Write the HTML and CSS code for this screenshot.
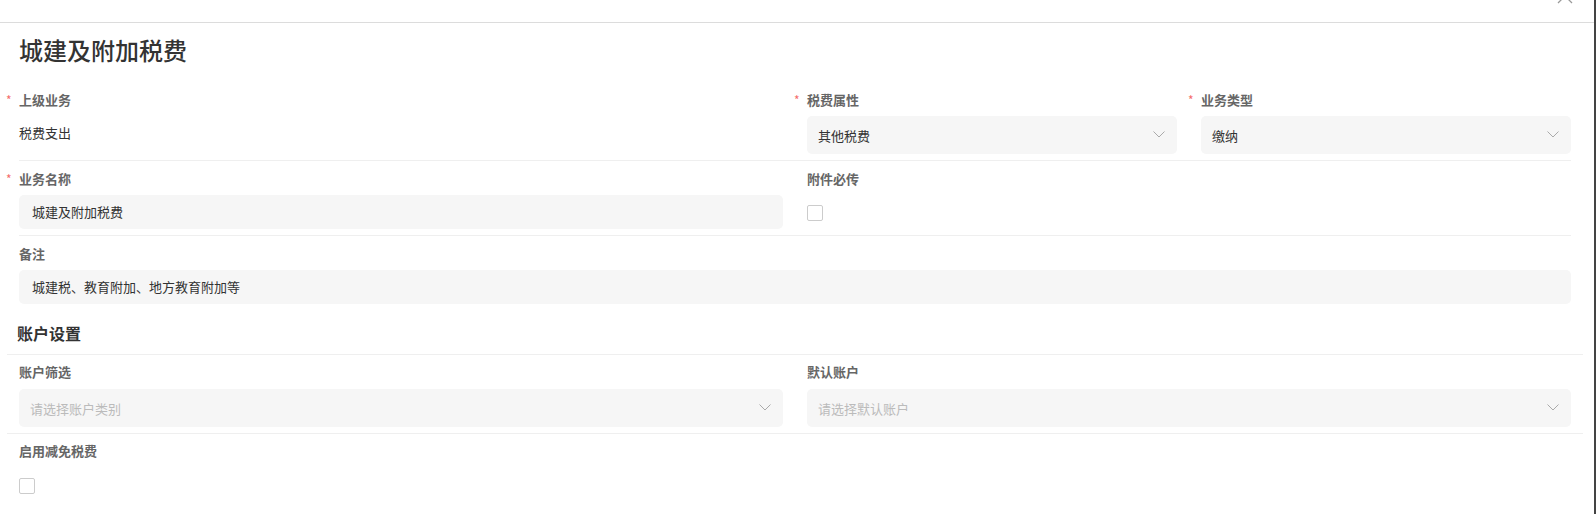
FILE: index.html
```html
<!DOCTYPE html>
<html lang="zh-CN">
<head>
    <meta charset="UTF-8">
    <meta name="viewport" content="width=device-width, initial-scale=1.0">
    <title>城建及附加税费</title>
    <link rel="stylesheet" href="styles.css">
</head>
<body>
    <div class="dialog">
        <div class="dialog-header">
            <button class="close-btn" aria-label="关闭">
                <svg width="16" height="16" viewBox="0 0 16 16"><path d="M1 1L15 15M15 1L1 15" stroke="#999" stroke-width="1.3" fill="none"/></svg>
            </button>
        </div>

        <div class="dialog-body">
            <h2 class="page-title">城建及附加税费</h2>

            <div class="form-row inset">
                <div class="form-item span-2">
                    <label class="form-label required">上级业务</label>
                    <div class="form-text">税费支出</div>
                </div>
                <div class="form-item">
                    <label class="form-label required">税费属性</label>
                    <div class="select">
                        <span>其他税费</span>
                        <svg class="chevron" width="12" height="7" viewBox="0 0 12 7"><path d="M0.5 0.5L6 6L11.5 0.5" stroke="#aaa" stroke-width="1" fill="none"/></svg>
                    </div>
                </div>
                <div class="form-item">
                    <label class="form-label required">业务类型</label>
                    <div class="select">
                        <span>缴纳</span>
                        <svg class="chevron" width="12" height="7" viewBox="0 0 12 7"><path d="M0.5 0.5L6 6L11.5 0.5" stroke="#aaa" stroke-width="1" fill="none"/></svg>
                    </div>
                </div>
            </div>

            <div class="form-row inset">
                <div class="form-item span-2">
                    <label class="form-label required">业务名称</label>
                    <div class="input">城建及附加税费</div>
                </div>
                <div class="form-item">
                    <label class="form-label">附件必传</label>
                    <div class="check-wrap"><span class="checkbox"></span></div>
                </div>
            </div>

            <div class="form-row inset no-border">
                <div class="form-item span-4">
                    <label class="form-label">备注</label>
                    <div class="input">城建税、教育附加、地方教育附加等</div>
                </div>
            </div>

            <div class="section-title">账户设置</div>

            <div class="form-row">
                <div class="form-item span-2">
                    <label class="form-label">账户筛选</label>
                    <div class="select placeholder">
                        <span>请选择账户类别</span>
                        <svg class="chevron" width="12" height="7" viewBox="0 0 12 7"><path d="M0.5 0.5L6 6L11.5 0.5" stroke="#aaa" stroke-width="1" fill="none"/></svg>
                    </div>
                </div>
                <div class="form-item span-2">
                    <label class="form-label">默认账户</label>
                    <div class="select placeholder">
                        <span>请选择默认账户</span>
                        <svg class="chevron" width="12" height="7" viewBox="0 0 12 7"><path d="M0.5 0.5L6 6L11.5 0.5" stroke="#aaa" stroke-width="1" fill="none"/></svg>
                    </div>
                </div>
            </div>

            <div class="form-row no-border">
                <div class="form-item">
                    <label class="form-label">启用减免税费</label>
                    <div class="check-wrap"><span class="checkbox"></span></div>
                </div>
            </div>
        </div>
    </div>
</body>
</html>
```

FILE: styles.css
```css
* {
    margin: 0;
    padding: 0;
    box-sizing: border-box;
}

body {
    font-family: "Noto Sans CJK SC", "Noto Sans", sans-serif;
    font-size: 13px;
    color: #333;
    background-color: #fff;
}

.dialog {
    width: 1596px;
    height: 514px;
    border-right: 2px solid #444;
    overflow: hidden;
}

.dialog-header {
    position: relative;
    height: 23px;
    border-bottom: 1px solid #dcdcdc;
}

.close-btn {
    position: absolute;
    top: -12px;
    right: 21px;
    width: 16px;
    height: 16px;
    border: none;
    background: none;
    cursor: pointer;
}

.close-btn svg {
    display: block;
}

.dialog-body {
    width: 1583px;
    padding-left: 7px;
}

.page-title {
    margin: 11px 0 16px 12px;
    font-size: 24px;
    line-height: 32px;
    font-weight: 500;
    color: #333;
}

.form-row {
    display: grid;
    grid-template-columns: repeat(4, 1fr);
    column-gap: 24px;
    padding: 0 12px;
    border-bottom: 1px solid #efefef;
}

.form-row.inset {
    margin: 0 12px;
    padding: 0;
}

.form-row.no-border {
    border-bottom: none;
}

.form-item {
    padding: 7px 0 6px;
}

.form-row.inset .form-item {
    padding-top: 8px;
}

.span-2 {
    grid-column: span 2;
}

.span-4 {
    grid-column: span 4;
}

.form-label {
    display: block;
    line-height: 20px;
    margin-bottom: 6px;
    font-weight: bold;
    color: #666;
}

.form-row:not(.inset) .form-label {
    margin-bottom: 7px;
}

.form-label.required::before {
    content: "*";
    display: inline-block;
    width: 13px;
    margin-left: -13px;
    color: #f56c6c;
    font-size: 12px;
    font-weight: normal;
}

.form-text {
    line-height: 34px;
    color: #333;
}

.input {
    height: 34px;
    line-height: 34px;
    padding: 0 13px;
    background-color: #f6f6f6;
    border-radius: 5px;
    color: #333;
}

.select {
    display: flex;
    align-items: center;
    justify-content: space-between;
    height: 38px;
    padding: 0 12px 0 11px;
    background-color: #f6f6f6;
    border-radius: 5px;
    color: #333;
}

.select.placeholder {
    color: #bbb;
}

.chevron {
    display: block;
    margin-top: -1px;
}

.check-wrap {
    height: 34px;
    padding-top: 10px;
}

.checkbox {
    display: block;
    width: 16px;
    height: 16px;
    border: 1px solid #ccc;
    border-radius: 2px;
    background-color: #fff;
}

.section-title {
    padding: 11px 10px 9px;
    font-size: 16px;
    line-height: 24px;
    font-weight: bold;
    color: #333;
    border-bottom: 1px solid #efefef;
}
```
